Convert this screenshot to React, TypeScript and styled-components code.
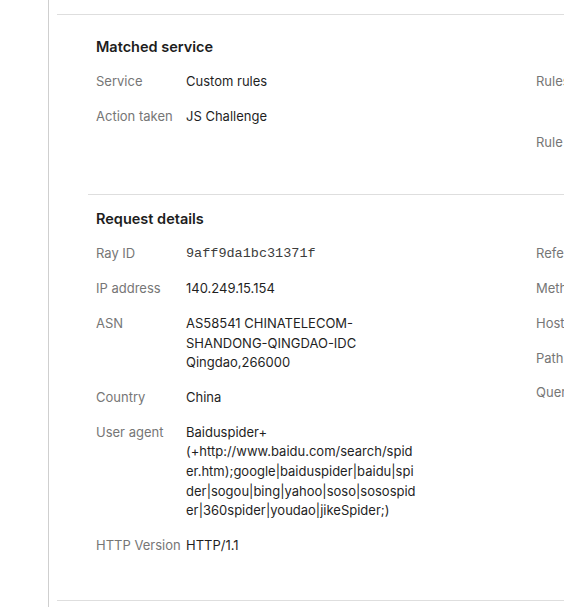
import React, { FC } from 'react';
import styled, { createGlobalStyle } from 'styled-components';

const GlobalStyle = createGlobalStyle`
  html, body {
    margin: 0;
    padding: 0;
    background: #ffffff;
    overflow: hidden;
  }
  body {
    font-family: Inter, 'Liberation Sans', sans-serif;
    font-size: 13px;
    color: #1f1f1f;
  }
`;

const Page = styled.div`
  display: flex;
  min-height: 607px;
`;

const Gutter = styled.div`
  width: 48px;
  flex: none;
  border-right: 1px solid #cfcfcf;
`;

const Panel = styled.div`
  flex: 1;
  padding-left: 8px;
  padding-top: 14px;
`;

const Details = styled.div`
  border-top: 1px solid #dedede;
  border-bottom: 1px solid #dedede;
  padding-top: 8px;
`;

const Section = styled.section<{ $divided?: boolean; $bottom: number }>`
  margin-left: 31px;
  padding: 14px 0 ${(p) => p.$bottom}px 8px;
  border-top: ${(p) => (p.$divided ? '1px solid #dedede' : 'none')};
`;

const Heading = styled.h2`
  margin: 0 0 15px;
  font-size: 14.5px;
  line-height: 20px;
  font-weight: 600;
  color: #1d1d1d;
`;

const Columns = styled.div`
  display: grid;
  grid-template-columns: 440px 1fr;
  overflow: hidden;
`;

const List = styled.dl`
  margin: 0;
  display: flex;
  flex-direction: column;
  gap: 15px;
`;

const Row = styled.div`
  display: grid;
  grid-template-columns: 90px 232px;
  line-height: 19.7px;
`;

const Label = styled.dt`
  color: #767676;
  white-space: nowrap;
`;

const Value = styled.dd<{ $mono?: boolean }>`
  margin: 0;
  color: ${(p) => (p.$mono ? '#3c3c3c' : '#1f1f1f')};
  word-break: break-all;
  font-family: ${(p) =>
    p.$mono ? "'Liberation Mono', 'DejaVu Sans Mono', monospace" : 'inherit'};
  font-size: ${(p) => (p.$mono ? '13.5px' : '13px')};
`;

const SideLabel = styled.dt`
  color: #767676;
  white-space: nowrap;
  line-height: 19.7px;
`;

type Item = { label: string; value: string; mono?: boolean };

const matched: Item[] = [
  { label: 'Service', value: 'Custom rules' },
  { label: 'Action taken', value: 'JS Challenge' },
];

const request: Item[] = [
  { label: 'Ray ID', value: '9aff9da1bc31371f', mono: true },
  { label: 'IP address', value: '140.249.15.154' },
  { label: 'ASN', value: 'AS58541 CHINATELECOM-SHANDONG-QINGDAO-IDC Qingdao,266000' },
  { label: 'Country', value: 'China' },
  {
    label: 'User agent',
    value:
      'Baiduspider+(+http://www.baidu.com/search/spider.htm);google|baiduspider|baidu|spider|sogou|bing|yahoo|soso|sosospider|360spider|youdao|jikeSpider;)',
  },
  { label: 'HTTP Version', value: 'HTTP/1.1' },
];

const DetailList: FC<{ items: Item[] }> = ({ items }) => (
  <List>
    {items.map((it) => (
      <Row key={it.label}>
        <Label>{it.label}</Label>
        <Value $mono={it.mono}>
          {it.label === 'ASN' ? (
            <>
              AS58541 CHINATELECOM-
              <br />
              SHANDONG-QINGDAO-IDC
              <br />
              Qingdao,266000
            </>
          ) : it.label === 'User agent' ? (
            <>
              Baiduspider+
              <br />
              {it.value.slice('Baiduspider+'.length)}
            </>
          ) : (
            it.value
          )}
        </Value>
      </Row>
    ))}
  </List>
);

const SideList = styled(List)<{ $gap: number }>`
  gap: ${(p) => p.$gap}px;
`;

export default function App() {
  return (
    <>
      <GlobalStyle />
      <Page>
        <Gutter />
        <Panel>
          <Details>
            <Section $bottom={42}>
              <Heading>Matched service</Heading>
              <Columns>
                <DetailList items={matched} />
                <SideList $gap={41}>
                  <SideLabel>Rules</SideLabel>
                  <SideLabel>Rule</SideLabel>
                </SideList>
              </Columns>
            </Section>
            <Section $divided $bottom={44}>
              <Heading>Request details</Heading>
              <Columns>
                <DetailList items={request} />
                <SideList $gap={15}>
                  <SideLabel>Referer</SideLabel>
                  <SideLabel>Method</SideLabel>
                  <SideLabel>Host</SideLabel>
                  <SideLabel>Path</SideLabel>
                  <SideLabel>Query</SideLabel>
                </SideList>
              </Columns>
            </Section>
          </Details>
        </Panel>
      </Page>
    </>
  );
}
